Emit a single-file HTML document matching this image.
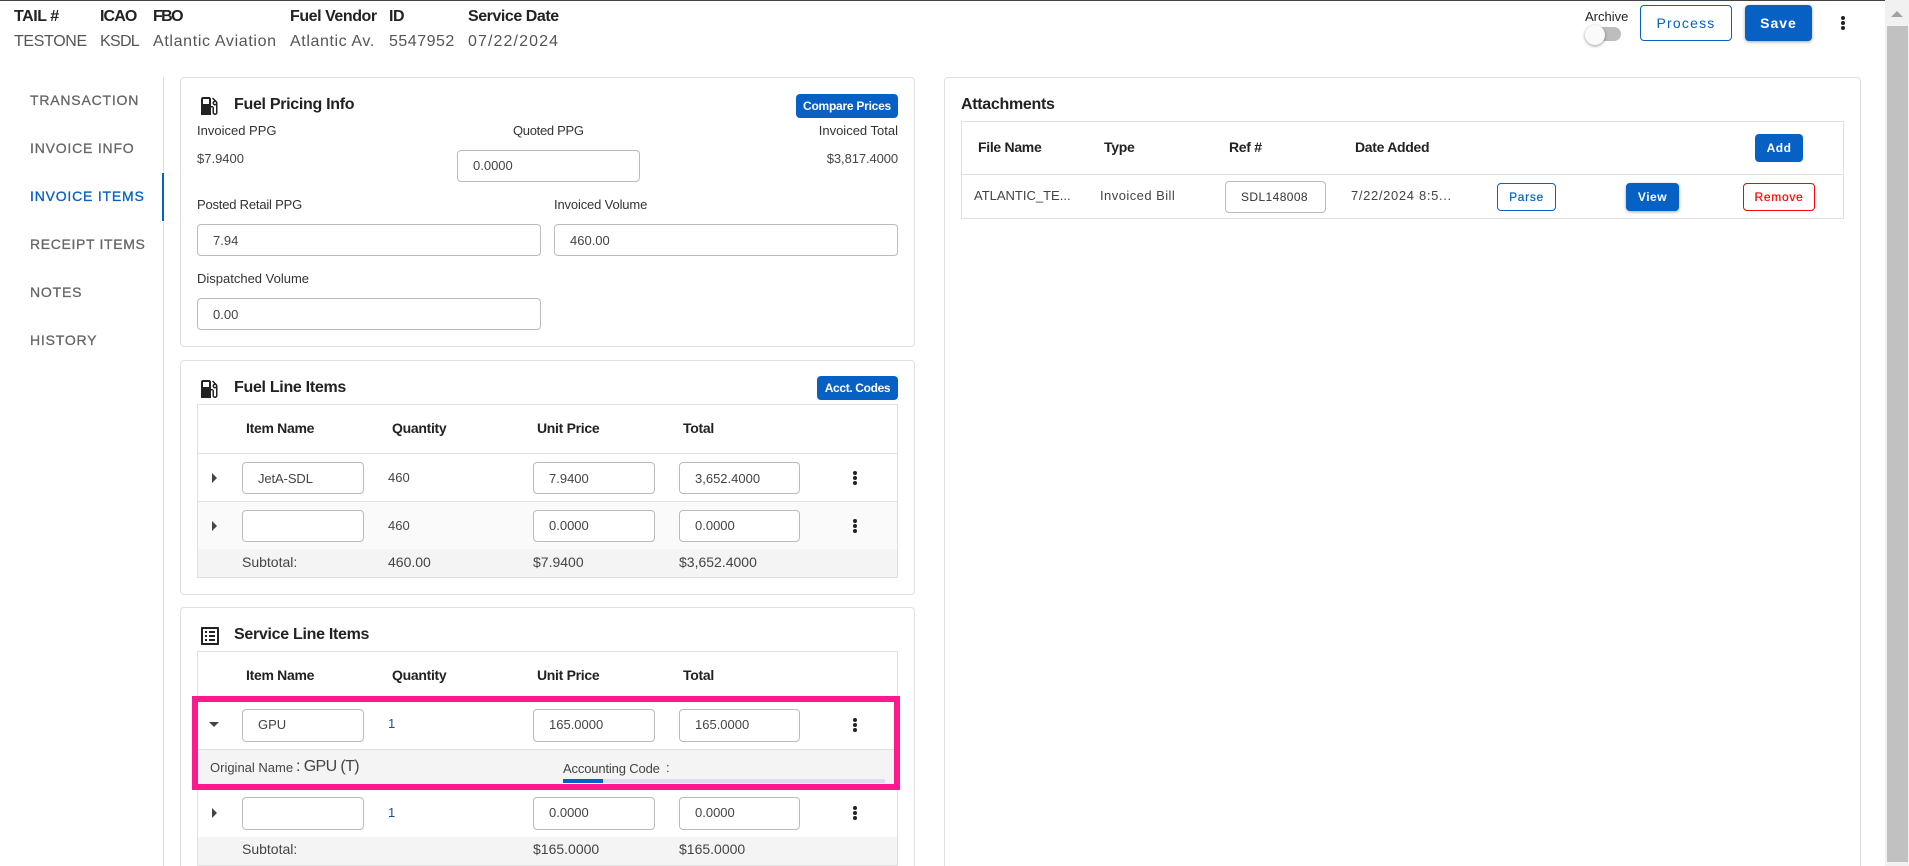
<!DOCTYPE html>
<html lang="en">
<head>
<meta charset="utf-8">
<title>Invoice Items</title>
<style>
html,body{margin:0;padding:0;width:1909px;height:866px;overflow:hidden;background:#fff;font-family:"Liberation Sans",sans-serif;color:#333}
#p{position:relative;width:1909px;height:866px;overflow:hidden}
#p div,#p span,#p svg{position:absolute}
.t{white-space:nowrap;line-height:20px;height:20px;font-size:13px;color:#444}
.h{font-size:16px;font-weight:700;color:#222;letter-spacing:-.45px}
.v{font-size:16px;color:#555;letter-spacing:.5px}
.n{font-size:14px;font-weight:400;letter-spacing:.8px;color:#666;-webkit-text-stroke:.3px #666}
.ct{font-size:16px;font-weight:700;color:#222;letter-spacing:-.3px}
.th{font-size:14px;font-weight:700;color:#222;letter-spacing:-.3px}
.card{border:1px solid #e0e0e0;border-radius:4px;box-sizing:border-box;background:#fff}
.in{border:1px solid #bbb;border-radius:4px;box-sizing:border-box;background:#fff}
.tb{border:1px solid #e0e0e0;box-sizing:border-box}
.l{background:#e0e0e0;height:1px}
.btn{background:#0760c4;color:#fff;border-radius:4px;font-weight:700;text-align:center;box-sizing:border-box}
.ol{background:#fff;border:1px solid #0760c4;color:#0760c4;border-radius:4px;text-align:center;box-sizing:border-box;font-weight:400;letter-spacing:1.2px}
.sh{box-shadow:0 1px 3px rgba(0,0,0,.35)}
.arr{width:0;height:0;border-top:5px solid transparent;border-bottom:5px solid transparent;border-left:5px solid #444}
.ard{width:0;height:0;border-left:5px solid transparent;border-right:5px solid transparent;border-top:5px solid #444}
</style>
</head>
<body>
<div id="p">
<div style="left:0;top:0;width:1909px;height:1px;background:#444"></div>

<!-- header -->
<span class="t h" style="left:14px;top:7px">TAIL #</span>
<span class="t h" style="left:100px;top:7px;letter-spacing:-.9px">ICAO</span>
<span class="t h" style="left:153px;top:7px;letter-spacing:-1.6px">FBO</span>
<span class="t h" style="left:290px;top:7px">Fuel Vendor</span>
<span class="t h" style="left:389px;top:7px">ID</span>
<span class="t h" style="left:468px;top:7px">Service Date</span>
<span class="t v" style="left:14px;top:32px;letter-spacing:-.35px">TESTONE</span>
<span class="t v" style="left:100px;top:32px;letter-spacing:-.7px">KSDL</span>
<span class="t v" style="left:153px;top:32px;letter-spacing:.65px">Atlantic Aviation</span>
<span class="t v" style="left:290px;top:32px;letter-spacing:.6px">Atlantic Av.</span>
<span class="t v" style="left:389px;top:32px">5547952</span>
<span class="t v" style="left:468px;top:32px;letter-spacing:1.1px">07/22/2024</span>

<span class="t" style="left:1585px;top:7px;color:#222;font-size:13px">Archive</span>
<div style="left:1592px;top:27px;width:29px;height:14px;border-radius:7px;background:#bdbdbd"></div>
<div style="left:1585px;top:25px;width:20px;height:20px;border-radius:50%;background:#fafafa;box-shadow:0 1px 3px rgba(0,0,0,.4)"></div>
<div class="ol" style="left:1640px;top:5px;width:92px;height:36px;line-height:34px;font-size:14px">Process</div>
<div class="btn sh" style="left:1745px;top:5px;width:67px;height:36px;line-height:36px;font-size:14px;letter-spacing:1px">Save</div>
<svg style="left:1838px;top:15px" width="10" height="16" viewBox="0 0 10 16"><circle cx="5" cy="3" r="2" fill="#222"/><circle cx="5" cy="8" r="2" fill="#222"/><circle cx="5" cy="13" r="2" fill="#222"/></svg>

<!-- scrollbar -->
<div style="left:1885px;top:0;width:24px;height:866px;background:#f1f1f1"></div>
<div style="left:1887px;top:26px;width:21px;height:836px;background:#c1c1c1"></div>
<div style="left:1891px;top:11px;width:0;height:0;border-left:6px solid transparent;border-right:6px solid transparent;border-bottom:6px solid #a3a3a3"></div>

<!-- sidebar -->
<div style="left:163px;top:77px;width:1px;height:789px;background:#e0e0e0"></div>
<div style="left:162px;top:173px;width:2px;height:48px;background:#0760c4"></div>
<span class="t n" style="left:30px;top:90px">TRANSACTION</span>
<span class="t n" style="left:30px;top:138px">INVOICE INFO</span>
<span class="t n" style="left:30px;top:186px;color:#0760c4;-webkit-text-stroke:.3px #0760c4">INVOICE ITEMS</span>
<span class="t n" style="left:30px;top:234px;letter-spacing:.65px">RECEIPT ITEMS</span>
<span class="t n" style="left:30px;top:282px">NOTES</span>
<span class="t n" style="left:30px;top:330px">HISTORY</span>

<!-- Card 1 -->
<div class="card" style="left:180px;top:77px;width:735px;height:270px"></div>
<svg style="left:197px;top:94px" width="24" height="24" viewBox="0 0 24 24"><path fill="#222" d="M19.77 7.23l.01-.01-3.72-3.72L15 4.56l2.11 2.11c-.94.36-1.61 1.26-1.61 2.33 0 1.38 1.12 2.5 2.5 2.5.36 0 .69-.08 1-.21v7.21c0 .55-.45 1-1 1s-1-.45-1-1V14c0-1.1-.9-2-2-2h-1V5c0-1.1-.9-2-2-2H6c-1.1 0-2 .9-2 2v16h10v-7.5h1.5v5c0 1.38 1.12 2.5 2.5 2.5s2.5-1.12 2.5-2.5V9c0-.69-.28-1.32-.73-1.77zM12 10H6V5h6v5zm6 0c-.55 0-1-.45-1-1s.45-1 1-1 1 .45 1 1-.45 1-1 1z"/></svg>
<span class="t ct" style="left:234px;top:95px">Fuel Pricing Info</span>
<div class="btn" style="left:796px;top:94px;width:102px;height:24px;line-height:24px;font-size:12px;letter-spacing:-.25px">Compare Prices</div>
<span class="t" style="left:197px;top:121px;color:#333">Invoiced PPG</span>
<span class="t" style="left:513px;top:121px;color:#333;letter-spacing:-.3px">Quoted PPG</span>
<span class="t" style="right:1011px;top:121px;color:#333">Invoiced Total</span>
<span class="t" style="left:197px;top:149px">$7.9400</span>
<span class="t" style="right:1011px;top:149px;letter-spacing:-.1px">$3,817.4000</span>
<div class="in" style="left:457px;top:150px;width:183px;height:32px"></div>
<span class="t" style="left:473px;top:156px">0.0000</span>
<span class="t" style="left:197px;top:195px;color:#333;letter-spacing:-.2px">Posted Retail PPG</span>
<span class="t" style="left:554px;top:195px;color:#333;letter-spacing:-.15px">Invoiced Volume</span>
<div class="in" style="left:197px;top:224px;width:344px;height:32px"></div>
<span class="t" style="left:213px;top:231px">7.94</span>
<div class="in" style="left:554px;top:224px;width:344px;height:32px"></div>
<span class="t" style="left:570px;top:231px">460.00</span>
<span class="t" style="left:197px;top:269px;color:#333">Dispatched Volume</span>
<div class="in" style="left:197px;top:298px;width:344px;height:32px"></div>
<span class="t" style="left:213px;top:305px">0.00</span>

<!-- Card 2 -->
<div class="card" style="left:180px;top:360px;width:735px;height:235px"></div>
<svg style="left:197px;top:377px" width="24" height="24" viewBox="0 0 24 24"><path fill="#222" d="M19.77 7.23l.01-.01-3.72-3.72L15 4.56l2.11 2.11c-.94.36-1.61 1.26-1.61 2.33 0 1.38 1.12 2.5 2.5 2.5.36 0 .69-.08 1-.21v7.21c0 .55-.45 1-1 1s-1-.45-1-1V14c0-1.1-.9-2-2-2h-1V5c0-1.1-.9-2-2-2H6c-1.1 0-2 .9-2 2v16h10v-7.5h1.5v5c0 1.38 1.12 2.5 2.5 2.5s2.5-1.12 2.5-2.5V9c0-.69-.28-1.32-.73-1.77zM12 10H6V5h6v5zm6 0c-.55 0-1-.45-1-1s.45-1 1-1 1 .45 1 1-.45 1-1 1z"/></svg>
<span class="t ct" style="left:234px;top:376px;top:378px">Fuel Line Items</span>
<div class="btn" style="left:817px;top:376px;width:81px;height:24px;line-height:24px;font-size:12px;letter-spacing:-.35px">Acct. Codes</div>
<div class="tb" style="left:197px;top:404px;width:701px;height:174px"></div>
<div style="left:198px;top:501px;width:699px;height:48px;background:#fafafa"></div>
<div style="left:198px;top:549px;width:699px;height:28px;background:#f4f4f4"></div>
<div class="l" style="left:198px;top:453px;width:699px"></div>
<div class="l" style="left:198px;top:501px;width:699px"></div>
<span class="t th" style="left:246px;top:418px">Item Name</span>
<span class="t th" style="left:392px;top:418px">Quantity</span>
<span class="t th" style="left:537px;top:418px">Unit Price</span>
<span class="t th" style="left:683px;top:418px">Total</span>

<div class="arr" style="left:212px;top:473px"></div>
<div class="in" style="left:242px;top:462px;width:122px;height:32px"></div>
<span class="t" style="left:258px;top:469px;letter-spacing:-.1px">JetA-SDL</span>
<span class="t" style="left:388px;top:468px">460</span>
<div class="in" style="left:533px;top:462px;width:122px;height:32px"></div>
<span class="t" style="left:549px;top:469px">7.9400</span>
<div class="in" style="left:679px;top:462px;width:121px;height:32px"></div>
<span class="t" style="left:695px;top:469px">3,652.4000</span>
<svg style="left:850px;top:470px" width="10" height="16" viewBox="0 0 10 16"><circle cx="5" cy="3" r="2" fill="#222"/><circle cx="5" cy="8" r="2" fill="#222"/><circle cx="5" cy="13" r="2" fill="#222"/></svg>

<div class="arr" style="left:212px;top:521px"></div>
<div class="in" style="left:242px;top:510px;width:122px;height:32px"></div>
<span class="t" style="left:388px;top:516px">460</span>
<div class="in" style="left:533px;top:510px;width:122px;height:32px"></div>
<span class="t" style="left:549px;top:516px">0.0000</span>
<div class="in" style="left:679px;top:510px;width:121px;height:32px"></div>
<span class="t" style="left:695px;top:516px">0.0000</span>
<svg style="left:850px;top:518px" width="10" height="16" viewBox="0 0 10 16"><circle cx="5" cy="3" r="2" fill="#222"/><circle cx="5" cy="8" r="2" fill="#222"/><circle cx="5" cy="13" r="2" fill="#222"/></svg>

<span class="t" style="left:242px;top:552px;font-size:14px">Subtotal:</span>
<span class="t" style="left:388px;top:552px;font-size:14px">460.00</span>
<span class="t" style="left:533px;top:552px;font-size:14px">$7.9400</span>
<span class="t" style="left:679px;top:552px;font-size:14px">$3,652.4000</span>

<!-- Card 3 -->
<div class="card" style="left:180px;top:607px;width:735px;height:280px"></div>
<svg style="left:198px;top:624px" width="24" height="24" viewBox="0 0 24 24"><path fill="#222" d="M19 5v14H5V5h14m1.1-2H3.9c-.5 0-.9.4-.9.9v16.2c0 .4.4.9.9.9h16.2c.4 0 .9-.5.9-.9V3.9c0-.5-.5-.9-.9-.9zM11 7h6v2h-6V7zm0 4h6v2h-6v-2zm0 4h6v2h-6zM7 7h2v2H7zm0 4h2v2H7zm0 4h2v2H7z"/></svg>
<span class="t ct" style="left:234px;top:625px">Service Line Items</span>
<div class="tb" style="left:197px;top:651px;width:701px;height:215px"></div>
<span class="t th" style="left:246px;top:665px">Item Name</span>
<span class="t th" style="left:392px;top:665px">Quantity</span>
<span class="t th" style="left:537px;top:665px">Unit Price</span>
<span class="t th" style="left:683px;top:665px">Total</span>

<div style="left:198px;top:749px;width:699px;height:35px;background:#f4f4f4"></div>
<div class="l" style="left:198px;top:749px;width:699px"></div>
<div style="left:198px;top:837px;width:699px;height:28px;background:#f4f4f4"></div>

<div class="ard" style="left:209px;top:722px"></div>
<div class="in" style="left:242px;top:709px;width:122px;height:33px"></div>
<span class="t" style="left:258px;top:715px">GPU</span>
<span class="t" style="left:388px;top:714px;color:#1f4f8f">1</span>
<div class="in" style="left:533px;top:709px;width:122px;height:33px"></div>
<span class="t" style="left:549px;top:715px">165.0000</span>
<div class="in" style="left:679px;top:709px;width:121px;height:33px"></div>
<span class="t" style="left:695px;top:715px">165.0000</span>
<svg style="left:850px;top:717px" width="10" height="16" viewBox="0 0 10 16"><circle cx="5" cy="3" r="2" fill="#222"/><circle cx="5" cy="8" r="2" fill="#222"/><circle cx="5" cy="13" r="2" fill="#222"/></svg>

<span class="t" style="left:210px;top:758px;font-size:13px">Original Name</span>
<span class="t" style="left:296px;top:757px;font-size:16px;color:#444;letter-spacing:-.6px">: GPU (T)</span>
<span class="t" style="left:563px;top:759px;font-size:13px;letter-spacing:-.15px">Accounting Code</span>
<span class="t" style="left:666px;top:758px;font-size:13px">:</span>
<div style="left:563px;top:779px;width:322px;height:4px;background:#e0dcf0"></div>
<div style="left:563px;top:779px;width:40px;height:4px;background:#0760c4"></div>

<div class="arr" style="left:212px;top:808px"></div>
<div class="in" style="left:242px;top:797px;width:122px;height:33px"></div>
<span class="t" style="left:388px;top:803px;color:#1f4f8f">1</span>
<div class="in" style="left:533px;top:797px;width:122px;height:33px"></div>
<span class="t" style="left:549px;top:803px">0.0000</span>
<div class="in" style="left:679px;top:797px;width:121px;height:33px"></div>
<span class="t" style="left:695px;top:803px">0.0000</span>
<svg style="left:850px;top:805px" width="10" height="16" viewBox="0 0 10 16"><circle cx="5" cy="3" r="2" fill="#222"/><circle cx="5" cy="8" r="2" fill="#222"/><circle cx="5" cy="13" r="2" fill="#222"/></svg>

<span class="t" style="left:242px;top:839px;font-size:14px">Subtotal:</span>
<span class="t" style="left:533px;top:839px;font-size:14px">$165.0000</span>
<span class="t" style="left:679px;top:839px;font-size:14px">$165.0000</span>

<div style="left:192px;top:696px;width:708px;height:94px;box-sizing:border-box;border:6px solid #fe1a8e"></div>

<!-- Attachments -->
<div class="card" style="left:944px;top:77px;width:917px;height:820px"></div>
<span class="t ct" style="left:961px;top:95px">Attachments</span>
<div class="tb" style="left:961px;top:121px;width:883px;height:98px"></div>
<div class="l" style="left:962px;top:174px;width:881px"></div>
<span class="t th" style="left:978px;top:137px">File Name</span>
<span class="t th" style="left:1104px;top:137px">Type</span>
<span class="t th" style="left:1229px;top:137px">Ref #</span>
<span class="t th" style="left:1355px;top:137px">Date Added</span>
<div class="btn" style="left:1755px;top:134px;width:48px;height:28px;line-height:28px;font-size:12px;letter-spacing:.5px">Add</div>
<span class="t" style="left:974px;top:186px">ATLANTIC_TE...</span>
<span class="t" style="left:1100px;top:186px;letter-spacing:.45px">Invoiced Bill</span>
<div class="in" style="left:1225px;top:181px;width:101px;height:32px"></div>
<span class="t" style="left:1241px;top:187px;font-size:12px;letter-spacing:.4px;color:#333">SDL148008</span>
<span class="t" style="left:1351px;top:186px;letter-spacing:.65px">7/22/2024 8:5...</span>
<div class="ol" style="left:1497px;top:183px;width:59px;height:28px;line-height:26px;font-size:12px;letter-spacing:.7px;-webkit-text-stroke:.2px #0760c4">Parse</div>
<div class="btn sh" style="left:1626px;top:183px;width:53px;height:28px;line-height:28px;font-size:12px;letter-spacing:.5px">View</div>
<div class="ol" style="left:1743px;top:183px;width:72px;height:28px;line-height:26px;font-size:12px;border-color:#f00;color:#f00;letter-spacing:.7px;-webkit-text-stroke:.2px #f00">Remove</div>
</div>
</body>
</html>
